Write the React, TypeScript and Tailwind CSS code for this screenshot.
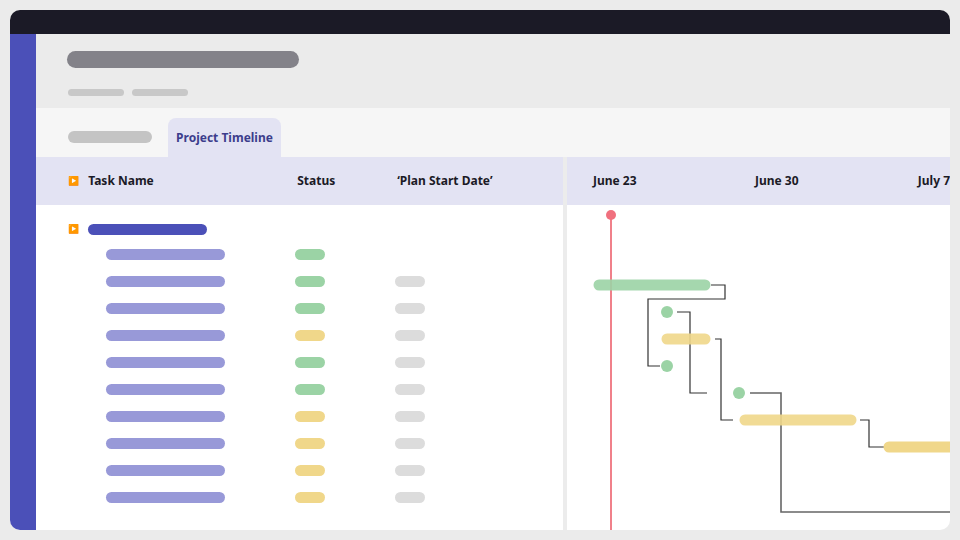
import React from 'react';

const statuses = ['g', 'g', 'g', 'y', 'g', 'g', 'y', 'y', 'y', 'y'];

const Pill = ({ className }: { className: string }) => <div className={`h-[11px] rounded-full ${className}`} />;

export default function App() {
  return (
    <div className="w-[960px] h-[540px] bg-[#ebebeb] p-[10px] font-['Lato','Noto_Sans',sans-serif]">
      <div className="w-full h-full rounded-[10px] overflow-hidden flex flex-col bg-white">
        <div className="h-[24px] bg-[#1b1a26] shrink-0" />
        <div className="flex flex-1 min-h-0">
          <div className="w-[26px] bg-[#4b50b8] shrink-0" />
          <div className="flex-1 flex flex-col min-w-0">
            <div className="h-[74px] bg-[#ebebeb] pl-[31px] pt-[17px] flex flex-col">
              <div className="w-[232px] h-[17px] rounded-full bg-[#838289]" />
              <div className="flex gap-2 mt-[21px] pl-px">
                <div className="w-[56px] h-[7px] rounded-full bg-[#c8c8c8]" />
                <div className="w-[56px] h-[7px] rounded-full bg-[#c8c8c8]" />
              </div>
            </div>
            <div className="h-[49px] bg-[#f6f6f6] flex items-end pl-[32px] gap-4">
              <div className="w-[84px] h-[12px] rounded-full bg-[#c4c4c4] mb-[14px]" />
              <div className="w-[113px] h-[39px] bg-[#e3e3f3] rounded-t-lg flex items-center justify-center text-[12px] font-bold text-[#3c3d8c]">Project Timeline</div>
            </div>
            <div className="flex flex-1 min-h-0">
              <div className="w-[527px] shrink-0 flex flex-col">
                <div className="h-[48px] bg-[#e3e3f3] flex items-center text-[12px] font-bold text-[#1b1a26]">
                  <span className="ml-[32px] text-[9px]">▶</span>
                  <span className="ml-[9px] w-[209px]">Task Name</span>
                  <span className="w-[100px]">Status</span>
                  <span>‘Plan Start Date’</span>
                </div>
                <div className="flex items-center h-[24px] mt-[12px]">
                  <span className="ml-[32px] text-[9px] text-[#4b50b8]">▶</span>
                  <div className="ml-[9px] w-[119px] h-[11px] rounded-full bg-[#4b50b8]" />
                </div>
                <div className="flex flex-col">
                  {statuses.map((s, i) => (
                    <div key={i} className="h-[27px] flex items-center">
                      <Pill className="ml-[70px] w-[119px] bg-[#9899d8]" />
                      <Pill className={`ml-[70px] w-[30px] ${s === 'g' ? 'bg-[#9bd3a5]' : 'bg-[#f0d78a]'}`} />
                      {i > 0 && <Pill className="ml-[70px] w-[30px] bg-[#dcdcdc]" />}
                    </div>
                  ))}
                </div>
              </div>
              <div className="w-[4px] bg-[#ececec] shrink-0" />
              <div className="flex-1 flex flex-col min-w-0">
                <div className="h-[48px] bg-[#e3e3f3] flex items-center text-[12px] font-bold text-[#1b1a26] whitespace-nowrap overflow-hidden">
                  <span className="ml-[26px] w-[169px]">June 23</span>
                  <span className="w-[170px]">June 30</span>
                  <span>July 7</span>
                </div>
                <div className="flex-1 relative overflow-hidden">
                  <svg width="383" height="325" className="absolute left-0 top-0">
                    <g fill="none" stroke="#333" strokeWidth="1.2">
                      <path d="M144 80H158V94H81V161H93" />
                      <path d="M110 107H123V188H140" />
                      <path d="M148 134H154V215H166" />
                      <path d="M183 188H214V307H383" stroke="#666" strokeWidth="1.6" />
                      <path d="M293 215H302V242H317" />
                    </g>
                    <line x1="44" y1="10" x2="44" y2="325" stroke="#f0808a" strokeWidth="2" />
                    <circle cx="44" cy="10" r="5" fill="#f0707e" />
                    <g strokeLinecap="round" strokeWidth="11">
                      <line x1="32" y1="80" x2="138" y2="80" stroke="#9bd3a5" strokeOpacity="0.9" />
                      <line x1="100" y1="134" x2="138" y2="134" stroke="#f0d78a" strokeOpacity="0.9" />
                      <line x1="178" y1="215" x2="284" y2="215" stroke="#f0d78a" strokeOpacity="0.9" />
                      <line x1="322" y1="242" x2="400" y2="242" stroke="#f0d78a" />
                    </g>
                    <circle cx="100" cy="107" r="6" fill="#9bd3a5" />
                    <circle cx="100" cy="161" r="6" fill="#9bd3a5" />
                    <circle cx="172" cy="188" r="6" fill="#9bd3a5" />
                  </svg>
                </div>
              </div>
            </div>
          </div>
        </div>
      </div>
    </div>
  );
}
